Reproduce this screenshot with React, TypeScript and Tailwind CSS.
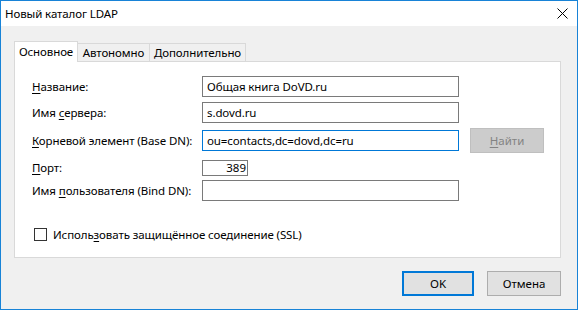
import React from "react";

const font = { fontFamily: '"Noto Sans", "Open Sans", sans-serif' };

const Label = ({ pre, u, post }: { pre?: string; u: string; post?: string }) => (
  <span className="w-[170px] shrink-0 whitespace-nowrap text-[11.5px] tracking-[-0.1px] text-black">
    {pre}
    <span className="underline underline-offset-2">{u}</span>
    {post}
  </span>
);

const Field = ({ value, focused }: { value?: string; focused?: boolean }) => (
  <div
    className={
      "w-[257px] h-[21px] shrink-0 bg-white border flex items-center px-[4px] text-[11.5px] tracking-[-0.1px] text-black whitespace-nowrap " +
      (focused ? "border-[#0078d7]" : "border-[#7a7a7a]")
    }
  >
    {value}
  </div>
);

export default function App() {
  return (
    <div
      className="w-[578px] h-[310px] border border-[#1883d7] bg-[#f0f0f0] flex flex-col"
      style={font}
    >
      <div className="h-[25px] bg-white flex items-center justify-between pl-[4px] pr-[9px]">
        <span className="text-[11.5px] tracking-[-0.1px] text-black">Новый каталог LDAP</span>
        <svg width="11" height="11" viewBox="0 0 11 11">
          <path d="M0.5 0.5 L10.5 10.5 M10.5 0.5 L0.5 10.5" stroke="#000" strokeWidth="1" />
        </svg>
      </div>

      <div className="flex flex-col pl-[13px] pr-[16px] pt-[14px]">
        <div className="flex items-end h-[21px] text-[11.5px] tracking-[-0.1px] text-black">
          <div className="h-[21px] w-[64px] bg-white border border-b-0 border-[#d9d9d9] flex items-center justify-center relative top-[1px] z-10">
            Основное
          </div>
          <div className="h-[18px] w-[72px] bg-[#f0f0f0] border border-l-0 border-b-0 border-[#d9d9d9] flex items-center justify-center">
            Автономно
          </div>
          <div className="h-[18px] w-[96px] bg-[#f0f0f0] border border-l-0 border-b-0 border-[#d9d9d9] flex items-center justify-center">
            Дополнительно
          </div>
        </div>

        <div className="h-[197px] bg-white border border-[#d9d9d9] flex flex-col pl-[17px] pt-[14px]">
          <div className="flex items-center h-[21px]">
            <Label u="Н" post="азвание:" />
            <Field value="Общая книга DoVD.ru" />
          </div>
          <div className="flex items-center h-[21px] mt-[5px]">
            <Label pre="Имя " u="с" post="ервера:" />
            <Field value="s.dovd.ru" />
          </div>
          <div className="flex items-center h-[25px] mt-[5px]">
            <Label u="К" post="орневой элемент (Base DN):" />
            <Field value="ou=contacts,dc=dovd,dc=ru" focused />
            <div className="ml-[11px] w-[74px] h-[25px] shrink-0 bg-[#cccccc] border border-[#bfbfbf] flex items-center justify-center text-[11.5px] text-[#838383]">
              <span>
                <span className="underline underline-offset-2">Н</span>айти
              </span>
            </div>
          </div>
          <div className="flex items-center h-[16px] mt-[7px]">
            <Label u="П" post="орт:" />
            <div className="w-[46px] h-[16px] shrink-0 bg-white border border-[#7a7a7a] flex items-center justify-end pr-[1px] text-[11.5px] text-black">
              389
            </div>
          </div>
          <div className="flex items-center h-[21px] mt-[4px]">
            <Label pre="Имя " u="п" post="ользователя (Bind DN):" />
            <Field />
          </div>
          <div className="flex items-center h-[13px] mt-[27px] ml-[2px]">
            <div className="w-[13px] h-[13px] shrink-0 border border-[#333333] bg-white" />
            <span className="ml-[6px] whitespace-nowrap text-[11.5px] tracking-[-0.1px] text-black">
              Исполь<span className="underline underline-offset-2">з</span>овать защищённое соединение (SSL)
            </span>
          </div>
        </div>

        <div className="flex justify-end gap-[13px] mt-[13px] text-[11.5px] text-black">
          <div className="w-[72px] h-[25px] bg-[#e1e1e1] border-2 border-[#0078d7] flex items-center justify-center">
            OK
          </div>
          <div className="w-[74px] h-[25px] bg-[#e1e1e1] border border-[#adadad] flex items-center justify-center">
            Отмена
          </div>
        </div>
      </div>
    </div>
  );
}
